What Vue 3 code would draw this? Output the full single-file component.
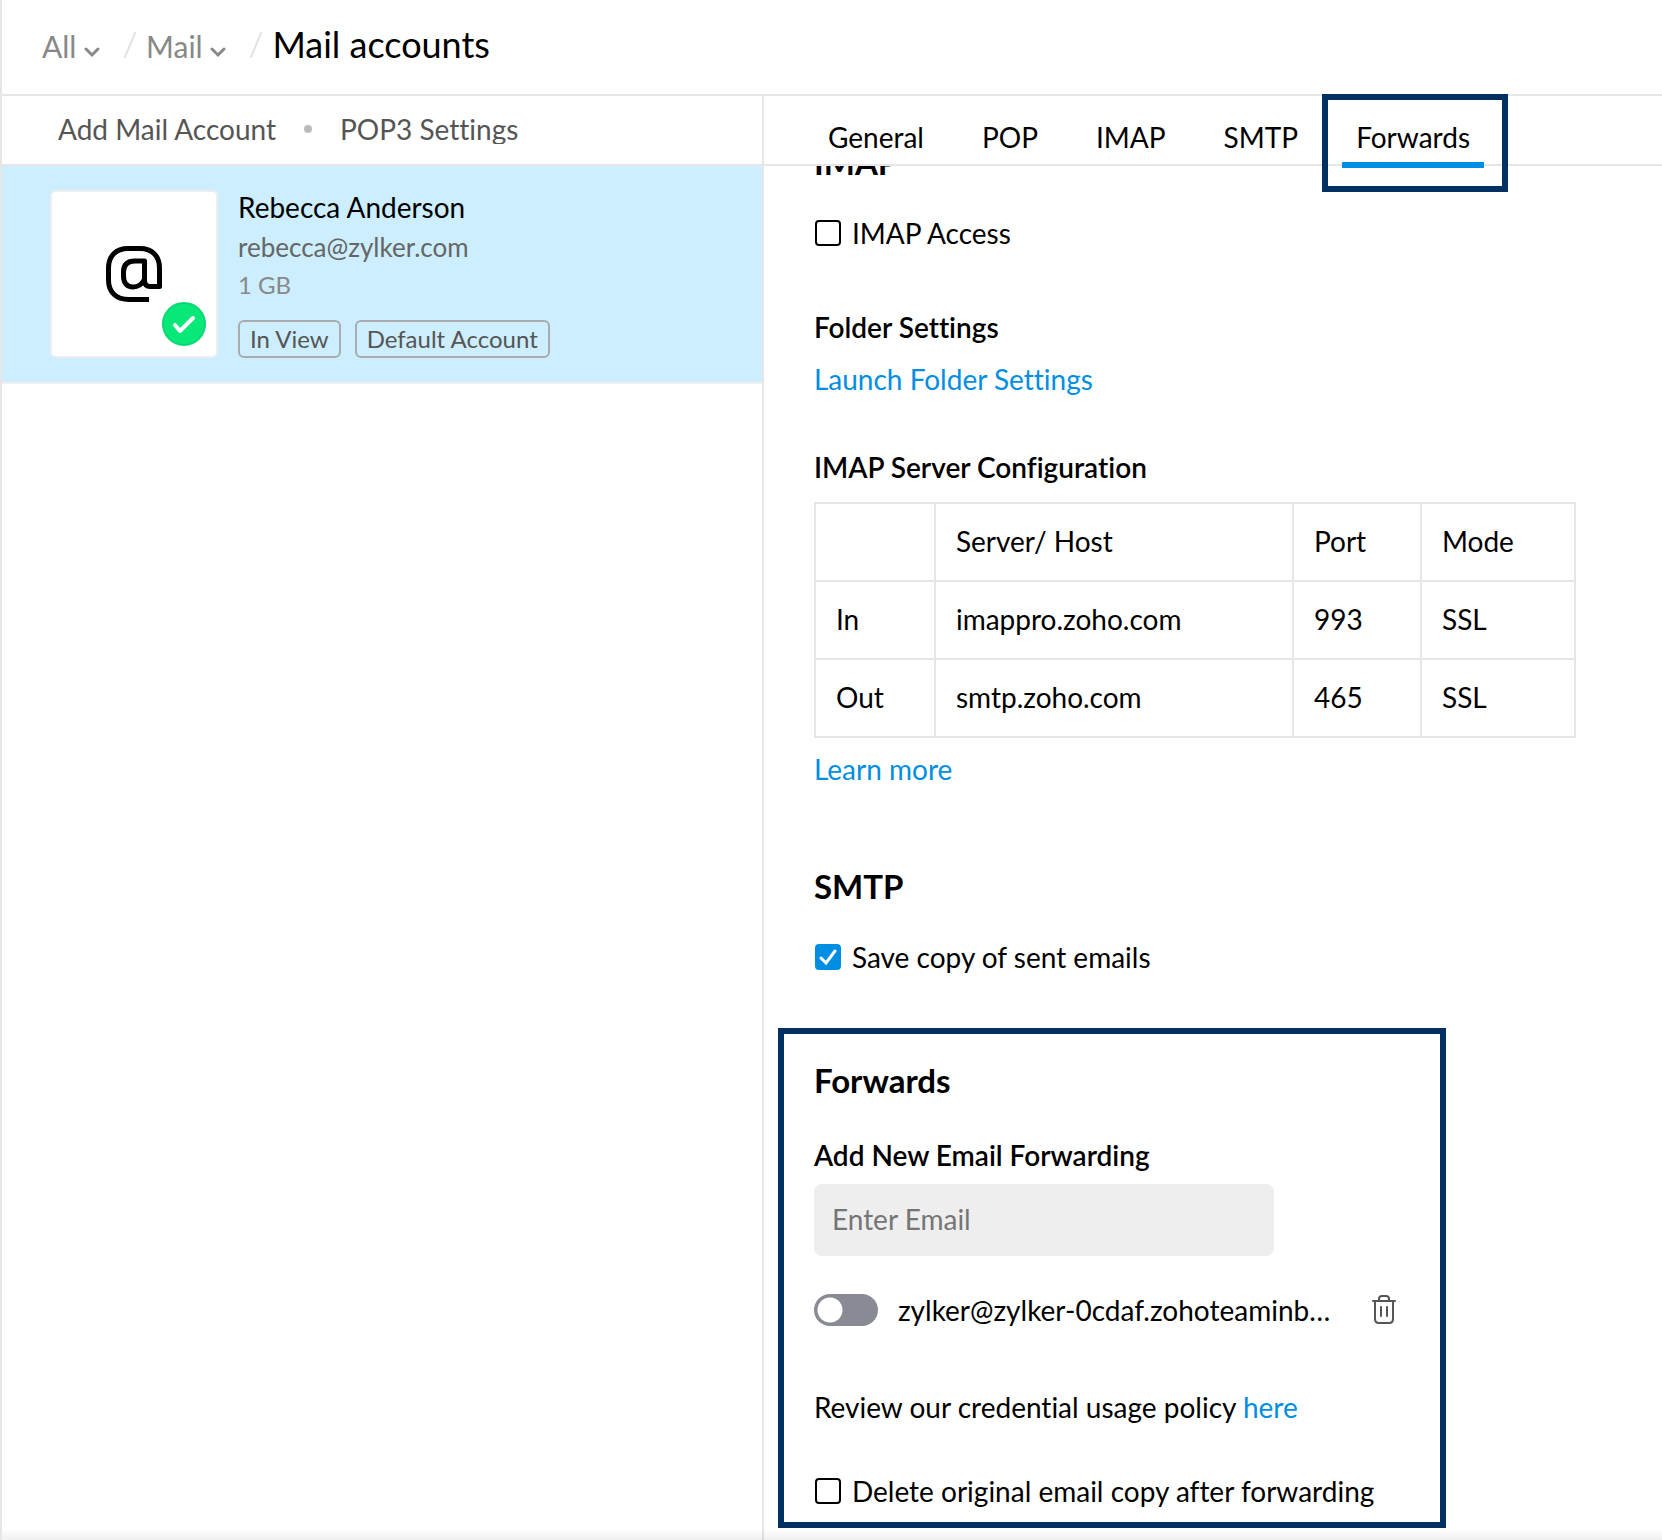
<template>
  <div class="page">
    <header class="topbar">
      <nav class="breadcrumb" aria-label="Breadcrumb">
        <template v-for="crumb in crumbs" :key="crumb">
          <button type="button" class="crumb">
            {{ crumb }}
            <svg class="chevron" viewBox="0 0 16 12" aria-hidden="true">
              <path d="M2 3l6 6 6-6" />
            </svg>
          </button>
          <svg class="slash" viewBox="0 0 12 26" aria-hidden="true">
            <path d="M11 1L1 25" />
          </svg>
        </template>
        <h1 class="page-title">Mail accounts</h1>
      </nav>
    </header>

    <main class="columns">
      <aside class="accounts">
        <div class="account-actions">
          <button type="button" class="action">Add Mail Account</button>
          <span class="dot" aria-hidden="true" />
          <button type="button" class="action">POP3 Settings</button>
        </div>

        <article class="account">
          <div class="avatar">
            <svg class="at" viewBox="0 0 56 56" role="img" aria-label="Mail">
              <path d="M43 53.500H23C10 53.500 2.500 46 2.500 34V22C2.500 10 10 2.500 22 2.500H34C46 2.500 53.500 10 53.500 22V40.500H44Q39 40.500 38.500 35V15H29C21 15 17.500 19 17.500 26V30C17.500 37 21 41 27 41C32 41 35.500 39 38 34" />
            </svg>
            <span class="badge">
              <svg viewBox="0 0 24 20" role="img" aria-label="Verified">
                <path d="M3 11l5 6L21 4" />
              </svg>
            </span>
          </div>
          <div class="account-info">
            <h2 class="account-name">{{ account.name }}</h2>
            <p class="account-email">{{ account.email }}</p>
            <p class="account-size">{{ account.size }}</p>
            <ul class="tags">
              <li v-for="tag in account.tags" :key="tag" class="tag">{{ tag }}</li>
            </ul>
          </div>
        </article>
      </aside>

      <section class="settings">
        <nav class="tabs" aria-label="Settings sections">
          <button
            v-for="tab in tabs"
            :key="tab"
            type="button"
            class="tab"
            :class="{ active: tab === activeTab }"
            @click="activeTab = tab"
          >{{ tab }}</button>
        </nav>

        <div class="content">
          <h2 class="section-title under-tabs">IMAP</h2>
          <label class="check">
            <input v-model="imapAccess" type="checkbox" />
            IMAP Access
          </label>

          <h3 class="sub-title folder-title">Folder Settings</h3>
          <p class="folder-link"><a href="#">Launch Folder Settings</a></p>

          <h3 class="sub-title server-title">IMAP Server Configuration</h3>
          <table class="servers">
            <colgroup>
              <col class="col-direction" />
              <col class="col-host" />
              <col class="col-port" />
              <col class="col-mode" />
            </colgroup>
            <thead>
              <tr>
                <td></td>
                <th scope="col">Server/ Host</th>
                <th scope="col">Port</th>
                <th scope="col">Mode</th>
              </tr>
            </thead>
            <tbody>
              <tr v-for="server in servers" :key="server.direction">
                <th scope="row">{{ server.direction }}</th>
                <td>{{ server.host }}</td>
                <td>{{ server.port }}</td>
                <td>{{ server.mode }}</td>
              </tr>
            </tbody>
          </table>
          <p class="learn-more"><a href="#">Learn more</a></p>

          <h2 class="section-title smtp-title">SMTP</h2>
          <label class="check">
            <input v-model="saveCopy" type="checkbox" />
            Save copy of sent emails
          </label>

          <section class="forwards">
            <h2 class="section-title">Forwards</h2>
            <label class="sub-title forward-label" for="forward-email">Add New Email Forwarding</label>
            <input
              id="forward-email"
              v-model="newEmail"
              class="email-input"
              type="email"
              placeholder="Enter Email"
            />

            <div class="forward-row">
              <label class="forward-toggle">
                <input v-model="forwardOn" class="switch" type="checkbox" role="switch" />
                zylker@zylker-0cdaf.zohoteaminb…
              </label>
              <button type="button" class="trash" aria-label="Delete">
                <svg viewBox="0 0 24 30" aria-hidden="true">
                  <path d="M1 6H23M7 6V4Q7 1 10 1H14Q17 1 17 4V6M3 6V24Q3 28 7 28H17Q21 28 21 24V6M9 12V21M15 12V21" />
                </svg>
              </button>
            </div>

            <p class="policy">Review our credential usage policy <a href="#">here</a></p>
            <label class="check delete-copy">
              <input v-model="deleteCopy" type="checkbox" />
              Delete original email copy after forwarding
            </label>
          </section>
        </div>
      </section>
    </main>
  </div>
</template>

<script setup>
import { ref } from 'vue';

const crumbs = ['All', 'Mail'];

const account = {
  name: 'Rebecca Anderson',
  email: 'rebecca@zylker.com',
  size: '1 GB',
  tags: ['In View', 'Default Account'],
};

const tabs = ['General', 'POP', 'IMAP', 'SMTP', 'Forwards'];
const activeTab = ref('Forwards');

const servers = [
  { direction: 'In', host: 'imappro.zoho.com', port: 993, mode: 'SSL' },
  { direction: 'Out', host: 'smtp.zoho.com', port: 465, mode: 'SSL' },
];

const imapAccess = ref(false);
const saveCopy = ref(true);
const forwardOn = ref(false);
const deleteCopy = ref(false);
const newEmail = ref('');
</script>

<style>
body {
  background: #fff;
}
</style>

<style scoped>
.page {
  position: relative;
  display: flex;
  flex-direction: column;
  min-height: 100vh;
  box-sizing: border-box;
  border-left: 2px solid #e6e6e6;
  font-family: Lato, sans-serif;
  font-size: 28px;
  line-height: 34px;
  font-variant-ligatures: none;
  color: #000;
}

/* Soft edge along the bottom of the window */
.page::after {
  content: "";
  position: absolute;
  inset: auto 0 0;
  height: 12px;
  background: linear-gradient(transparent, rgba(0, 0, 0, .06));
  pointer-events: none;
}

h1, h2, h3, p, ul {
  margin: 0;
  padding: 0;
}

button {
  border: 0;
  padding: 0;
  background: none;
  font: inherit;
  color: inherit;
  cursor: pointer;
}

a {
  color: #008ee2;
  text-decoration: none;
}

.topbar {
  padding: 22px 40px 26px;
  border-bottom: 2px solid #e6e6e6;
}

.breadcrumb {
  display: flex;
  align-items: baseline;
}

.crumb {
  font-size: 30px;
  line-height: 44px;
  color: #888;
}

.chevron {
  width: 16px;
  height: 12px;
  fill: none;
  stroke: #888;
  stroke-width: 3;
  stroke-linecap: round;
}

.slash {
  width: 12px;
  height: 26px;
  margin: 0 10px 0 24px;
  align-self: center;
  fill: none;
  stroke: #e3e3e3;
  stroke-width: 2;
  stroke-linecap: round;
}

.page-title {
  font-size: 36px;
  line-height: 44px;
  font-weight: 400;
}

.columns {
  display: grid;
  grid-template-columns: 45.9% minmax(0, 1fr);
  flex: 1;
}

.accounts {
  border-right: 2px solid #e6e6e6;
}

.account-actions {
  display: flex;
  align-items: center;
  padding: 18px 56px 20px;
  border-bottom: 2px solid #e6e6e6;
}

.action {
  line-height: 30px;
  color: #555;
  overflow: hidden;
}

.dot {
  width: 8px;
  height: 8px;
  margin: 0 28px;
  border-radius: 50%;
  background: #bbb;
}

.account {
  display: flex;
  gap: 20px;
  padding: 24px 48px;
  border-bottom: 2px solid #f0f0f0;
  background: #cef;
}

.avatar {
  position: relative;
  display: flex;
  align-items: center;
  justify-content: center;
  flex: none;
  width: 168px;
  height: 168px;
  box-sizing: border-box;
  border: 2px solid #eee;
  border-radius: 6px;
  background: #fff;
}

.at {
  width: 56px;
  height: 56px;
  fill: none;
  stroke: #000;
  stroke-width: 5;
  stroke-linejoin: round;
}

.badge {
  position: absolute;
  right: 10px;
  bottom: 10px;
  display: flex;
  align-items: center;
  justify-content: center;
  width: 44px;
  height: 44px;
  box-sizing: border-box;
  border: 2px solid #06d873;
  border-radius: 50%;
  background: #07e879;
}

.badge svg {
  width: 24px;
  height: 20px;
  fill: none;
  stroke: #fff;
  stroke-width: 4;
  stroke-linecap: round;
  stroke-linejoin: round;
}

.account-name {
  font-size: 28px;
  font-weight: 400;
}

.account-email {
  margin-top: 6px;
  font-size: 26px;
  color: #666;
}

.account-size {
  margin-top: 4px;
  font-size: 24px;
  color: #888;
}

.tags {
  display: flex;
  gap: 14px;
  margin-top: 18px;
  list-style: none;
}

.tag {
  padding: 0 10px;
  border: 2px solid #aaa;
  border-radius: 6px;
  font-size: 24px;
  color: #555;
}

.tabs {
  display: flex;
  gap: 30px;
  padding: 0 50px;
  border-bottom: 2px solid #e6e6e6;
}

.tab {
  position: relative;
  padding: 24px 14px 10px;
}

.active::before {
  content: "";
  position: absolute;
  inset: 66px 0 -4px;
  background: #008ee2;
}

/* Frame drawn around the selected tab */
.active::after {
  content: "";
  position: absolute;
  inset: -2px -24px -28px -20px;
  border: 6px solid #033063;
}

.content {
  padding: 0 14px 12px;
  overflow: hidden;
}

.content > * {
  margin-left: 36px;
}

.section-title {
  font-size: 33px;
  line-height: 40px;
  font-weight: 700;
}

/* Scrolled partly below the tab bar */
.under-tabs {
  margin-top: -24px;
}

.sub-title {
  font-size: 28px;
  font-weight: 600;
}

.check {
  display: flex;
  align-items: center;
  gap: 11px;
  margin-top: 34px;
}

.check input {
  appearance: none;
  flex: none;
  width: 26px;
  height: 26px;
  margin: 0 0 0 1px;
  border: 2px solid #000;
  border-radius: 4px;
  background: #fff;
}

.check input:checked {
  border-color: #008ee2;
  background: #008ee2 url("data:image/svg+xml,%3Csvg xmlns='http://www.w3.org/2000/svg' viewBox='0 0 22 22'%3E%3Cpath d='M4 12l5 5L18 5' fill='none' stroke='%23fff' stroke-width='3' stroke-linecap='round'/%3E%3C/svg%3E") center / 22px no-repeat;
}

.folder-title {
  margin-top: 60px;
}

.folder-link {
  margin-top: 18px;
}

.server-title {
  margin-top: 54px;
}

.servers {
  width: calc(100% - 36px);
  max-width: 762px;
  margin-top: 18px;
  border-collapse: collapse;
  table-layout: fixed;
}

.col-direction { width: 120px; }
.col-host { width: 358px; }
.col-port { width: 128px; }

.servers th,
.servers td {
  height: 34px;
  padding: 20px 20px 22px;
  border: 2px solid #e6e6e6;
  font-weight: 400;
  text-align: left;
}

.learn-more {
  margin-top: 14px;
}

.smtp-title {
  margin-top: 80px;
}

.forwards {
  box-sizing: border-box;
  max-width: 668px;
  margin-top: 54px;
  margin-left: 0;
  padding: 26px 30px 14px;
  border: 6px solid #033063;
}

.forward-label {
  display: block;
  margin-top: 38px;
}

.email-input {
  display: block;
  box-sizing: border-box;
  width: 100%;
  max-width: 460px;
  height: 72px;
  margin-top: 12px;
  padding: 0 18px 2px;
  border: 0;
  border-radius: 8px;
  background: #eee;
  font: inherit;
}

.email-input::placeholder {
  color: #757575;
}

.forward-row {
  display: flex;
  align-items: center;
  justify-content: space-between;
  min-height: 36px;
  margin-top: 36px;
  padding-right: 14px;
}

.forward-toggle {
  display: flex;
  align-items: center;
  gap: 20px;
}

.switch {
  appearance: none;
  flex: none;
  width: 64px;
  height: 32px;
  margin: 0;
  border-radius: 16px;
  background: radial-gradient(circle at 16px 16px, #fff 12px, #888b93 13px);
}

.switch:checked {
  background: radial-gradient(circle at 48px 16px, #fff 12px, #008ee2 13px);
}

.trash svg {
  display: block;
  width: 24px;
  height: 30px;
  fill: none;
  stroke: #555;
  stroke-width: 2;
  stroke-linecap: round;
}

.policy {
  margin-top: 62px;
}

.delete-copy {
  margin-top: 50px;
}
</style>
